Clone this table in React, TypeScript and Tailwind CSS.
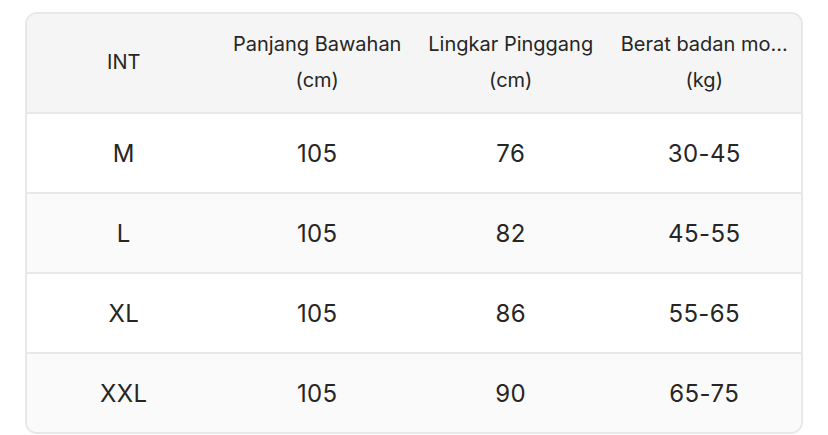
import React from 'react';

const headers = [
  { top: 'INT', bottom: '' },
  { top: 'Panjang Bawahan', bottom: '(cm)' },
  { top: 'Lingkar Pinggang', bottom: '(cm)' },
  { top: 'Berat badan mo...', bottom: '(kg)' },
];

const rows = [
  ['M', '105', '76', '30-45'],
  ['L', '105', '82', '45-55'],
  ['XL', '105', '86', '55-65'],
  ['XXL', '105', '90', '65-75'],
];

const App: React.FC = () => {
  return (
    <div className="w-[828px] h-[435px] bg-white pt-[12px] pl-[25px]" style={{ fontFamily: 'Inter, "Noto Sans", sans-serif' }}>
      <div className="w-[778px] border-2 border-[#e8e8e8] rounded-[12px] overflow-hidden text-[#262626]">
        {/* Header */}
        <div className="grid grid-cols-4 h-[98px] bg-[#f5f5f5]">
          {headers.map((h, i) => (
            <div key={i} className="flex flex-col items-center justify-center pb-[3px] text-[20px] leading-[36px] whitespace-nowrap">
              <span>{h.top}</span>
              {h.bottom && <span>{h.bottom}</span>}
            </div>
          ))}
        </div>

        {/* Rows */}
        {rows.map((row, r) => (
          <div
            key={r}
            className={`grid grid-cols-4 h-[80px] border-t-2 border-[#e8e8e8] ${r % 2 === 1 ? 'bg-[#fafafa]' : 'bg-white'}`}
          >
            {row.map((cell, c) => (
              <div key={c} className="flex items-center justify-center pt-[2px] text-[24px] tracking-[0.4px]">
                {cell}
              </div>
            ))}
          </div>
        ))}
      </div>
    </div>
  );
};

export default App;
